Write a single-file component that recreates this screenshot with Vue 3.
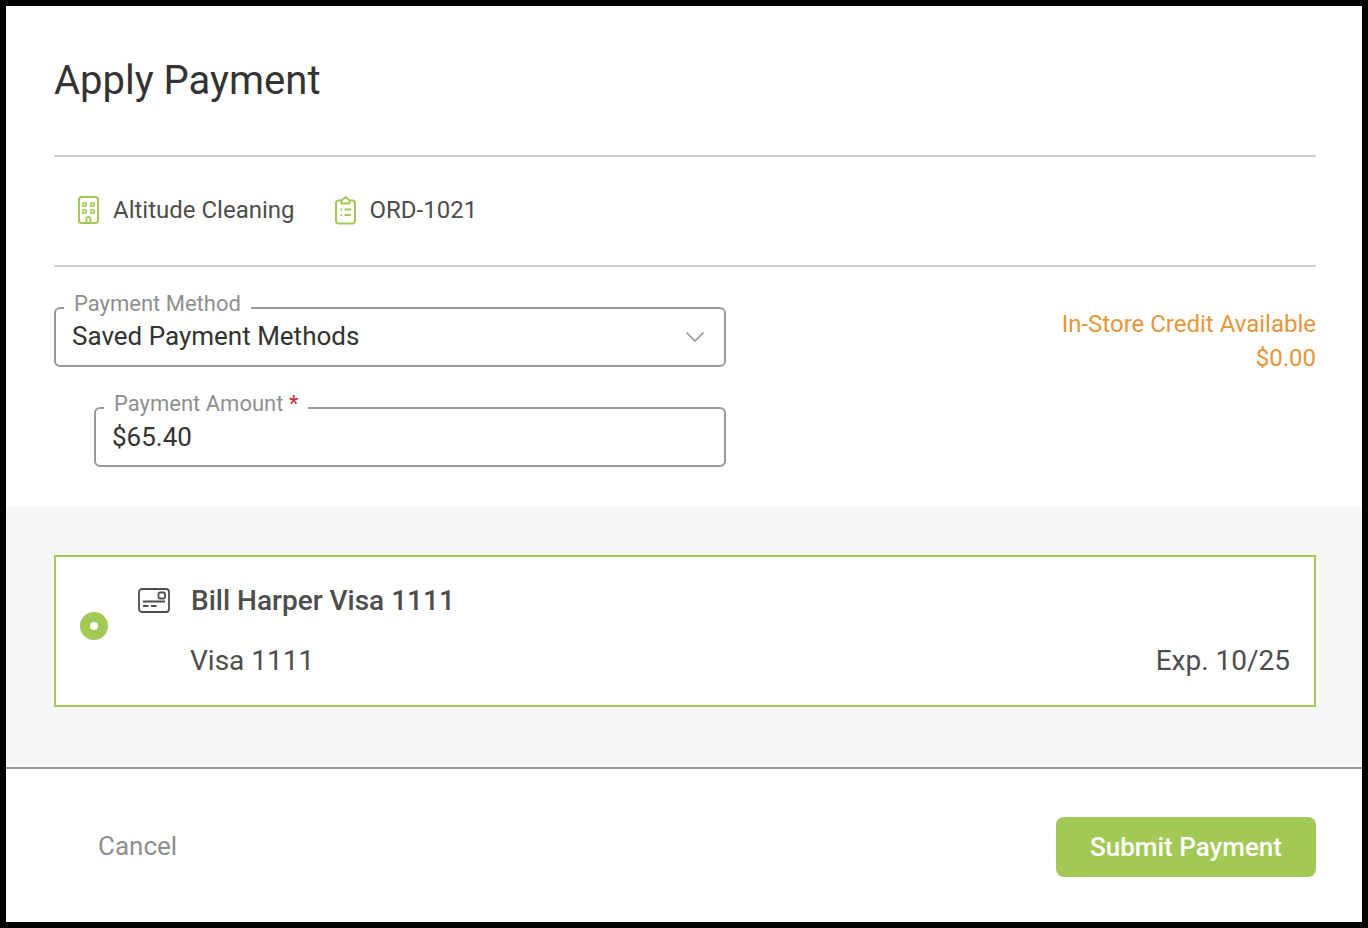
<template>
  <div class="frame">
    <div class="top">
      <h1 class="title">Apply Payment</h1>
      <div class="info">
        <span class="info-item">
          <svg class="ico" width="24" height="30" viewBox="0 0 24 30" fill="none" stroke="#a2c955" stroke-width="2">
            <rect x="2" y="2" width="19" height="26" rx="2.500" />
            <rect x="5.800" y="7.800" width="3.400" height="3.400" rx="0.800" stroke-width="1.600" />
            <rect x="13.800" y="7.800" width="3.400" height="3.400" rx="0.800" stroke-width="1.600" />
            <rect x="5.800" y="14.800" width="3.400" height="3.400" rx="0.800" stroke-width="1.600" />
            <rect x="13.800" y="14.800" width="3.400" height="3.400" rx="0.800" stroke-width="1.600" />
            <path d="M9.500 28v-4a2 2 0 0 1 4 0v4" stroke-width="1.800" />
          </svg>
          Altitude Cleaning
        </span>
        <span class="info-item second">
          <svg class="ico" width="24" height="30" viewBox="0 0 24 30" fill="none" stroke="#a2c955" stroke-width="2">
            <path d="M8 5.500H5.500A2.500 2.500 0 0 0 3 8v18a2.500 2.500 0 0 0 2.500 2.500h14A2.500 2.500 0 0 0 22 26V8a2.500 2.500 0 0 0-2.500-2.500H17" />
            <path d="M8.500 8.500v-3l4-3.500 4 3.500v3z" stroke-width="1.800" />
            <path d="M7.500 14.500H9M7.500 20H9M11.500 14.500H18M11.500 20H18" stroke-width="1.800" />
          </svg>
          ORD-1021
        </span>
      </div>
      <div class="form-row">
        <div class="fields">
          <fieldset class="field">
            <legend>Payment Method</legend>
            <div class="value">
              <span>Saved Payment Methods</span>
              <svg class="chev" width="20" height="12" viewBox="0 0 20 12" fill="none" stroke="#8f8f8f" stroke-width="1.500">
                <path d="M1.500 1.500 10 10l8.500-8.500" />
              </svg>
            </div>
          </fieldset>
          <fieldset class="field amount">
            <legend>Payment Amount <span class="req">*</span></legend>
            <div class="value"><span>$65.40</span></div>
          </fieldset>
        </div>
        <div class="credit">
          <div>In-Store Credit Available</div>
          <div>$0.00</div>
        </div>
      </div>
    </div>
    <div class="methods">
      <div class="card">
        <span class="radio"><span class="dot"></span></span>
        <div class="card-body">
          <div class="card-name">
            <svg class="card-ico" width="32" height="25" viewBox="0 0 32 25" fill="none" stroke="#4d4d4d" stroke-width="1.800">
              <rect x="1" y="1" width="30" height="23" rx="3" />
              <rect x="20.500" y="4.500" width="6.500" height="6" rx="1.500" />
              <path d="M5 13.500h22M5 18h5.500M13 18h5.500" />
            </svg>
            <strong>Bill Harper Visa 1111</strong>
          </div>
          <div class="card-detail">
            <span>Visa 1111</span>
            <span>Exp. 10/25</span>
          </div>
        </div>
      </div>
    </div>
    <div class="footer">
      <button class="cancel" type="button">Cancel</button>
      <button class="submit" type="button">Submit Payment</button>
    </div>
  </div>
</template>

<script setup>
</script>

<style>
html, body { margin: 0; background: #000; }
</style>

<style scoped>
* { box-sizing: border-box; }
.frame {
  width: 1368px;
  height: 928px;
  border: 6px solid #000;
  background: #fff;
  font-family: Roboto, "Liberation Sans", sans-serif;
  display: flex;
  flex-direction: column;
  color: #333;
}
.top { padding: 0 46px 0 48px; height: 501px; }
.title {
  margin: 0;
  height: 151px;
  padding-top: 51px;
  font-size: 40px;
  line-height: 48px;
  font-weight: 400;
  color: #333;
  border-bottom: 2px solid #d0d0d0;
}
.info {
  height: 110px;
  display: flex;
  align-items: center;
  padding: 0 0 2px 23px;
  gap: 38px;
  font-size: 24px;
  color: #4d4d4d;
  border-bottom: 2px solid #d0d0d0;
}
.info-item { display: flex; align-items: center; gap: 12px; }
.second { gap: 13px; }
.ico { flex: none; }
.form-row { display: flex; justify-content: space-between; }
.fields { width: 672px; display: flex; flex-direction: column; align-items: flex-end; padding-top: 24px; gap: 24px; }
.field {
  width: 100%;
  height: 76px;
  margin: 0;
  padding: 0 16px;
  border: 2px solid #999;
  border-radius: 6px;
  min-width: 0;
}
.amount { width: 632px; }
legend {
  margin-left: -8px;
  padding: 0 10px 8px;
  font-size: 22px;
  line-height: 26px;
  color: #8f8f8f;
}
.req { color: #b8333a; }
.value {
  height: 40px;
  margin-top: -9px;
  display: flex;
  justify-content: space-between;
  align-items: center;
  font-size: 26px;
  color: #333;
  padding-right: 3px;
}
.amount .value { margin-top: -8px; }
.chev { margin-top: 2px; }
.credit {
  padding-top: 40px;
  text-align: right;
  font-size: 24px;
  line-height: 34px;
  color: #e6963a;
}
.methods {
  height: 262px;
  background: #f7f7f7;
  border-bottom: 2px solid #999;
  padding: 48px 46px 0 48px;
}
.card {
  height: 152px;
  border: 2px solid #a2c955;
  background: #fff;
  display: flex;
  align-items: center;
  padding: 0 24px;
}
.radio {
  width: 28px;
  height: 28px;
  margin-bottom: 10px;
  border-radius: 50%;
  background: #a2c955;
  display: flex;
  align-items: center;
  justify-content: center;
  flex: none;
}
.dot { width: 8px; height: 8px; border-radius: 50%; background: #fff; }
.card-body { flex: 1; padding-left: 30px; }
.card-name { display: flex; align-items: center; gap: 21px; margin-bottom: 28px; }
.card-ico { margin-bottom: 2px; }
.card-name strong { font-size: 28px; line-height: 32px; font-weight: 500; color: #4d4d4d; }
.card-detail {
  display: flex;
  justify-content: space-between;
  padding-left: 52px;
  font-size: 28px;
  line-height: 32px;
  color: #4d4d4d;
}
.footer {
  flex: 1;
  display: flex;
  align-items: center;
  justify-content: space-between;
  padding: 3px 46px 0 92px;
}
button { font-family: inherit; border: none; cursor: pointer; }
.cancel { background: none; padding: 0; margin-bottom: 2px; font-size: 26px; color: #8f8f8f; }
.submit {
  width: 260px;
  height: 60px;
  border-radius: 8px;
  background: #a2c955;
  color: #fff;
  font-size: 26px;
  font-weight: 500;
}
</style>
